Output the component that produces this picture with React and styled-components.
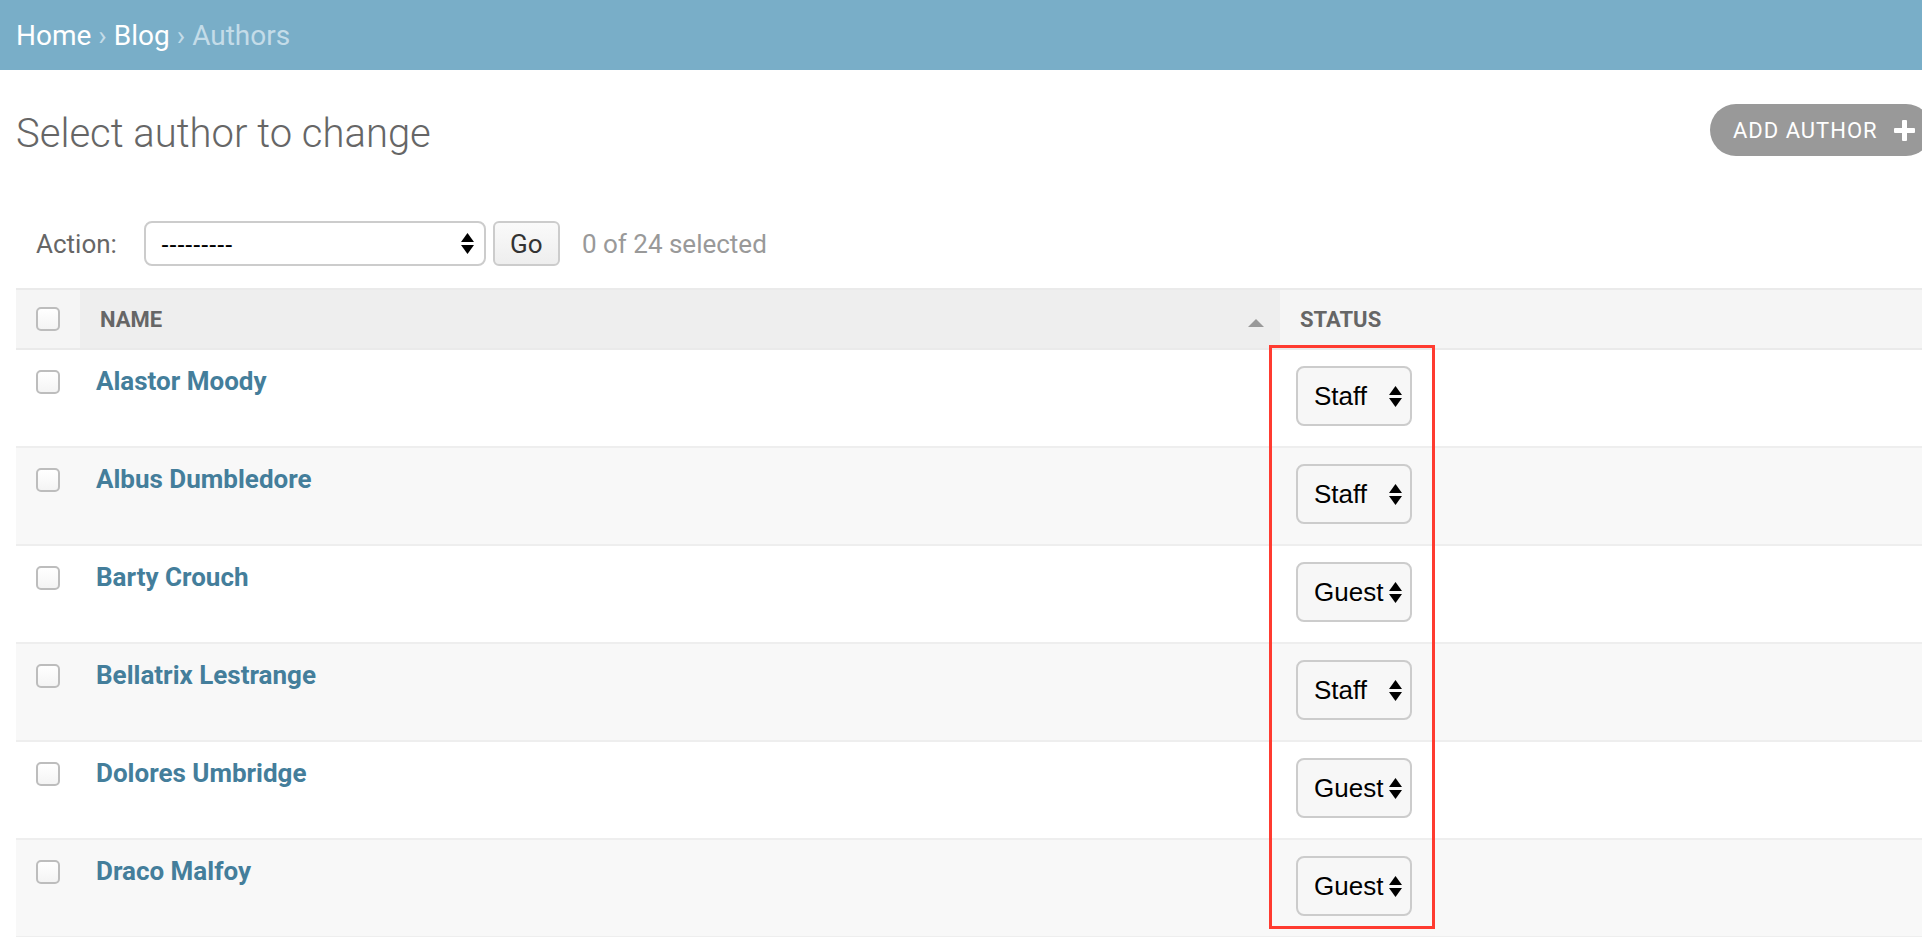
import React from "react";
import styled, { createGlobalStyle } from "styled-components";

const GlobalStyle = createGlobalStyle`
  html, body { margin: 0; padding: 0; overflow: hidden; background: #fff; }
  body { font-family: Roboto, "Liberation Sans", sans-serif; color: #333; }
  * { box-sizing: border-box; }
`;

const Breadcrumbs = styled.nav`
  height: 70px;
  background: #79aec8;
  display: flex;
  align-items: center;
  padding: 0 16px;
  font-size: 28px;
  color: #c4dce8;
`;

const Crumb = styled.a`
  color: #fff;
  text-decoration: none;
`;

const Sep = styled.span`
  margin: 0 7px;
`;

const Content = styled.main`
  padding: 34px 0 0 16px;
`;

const TitleRow = styled.div`
  display: flex;
  align-items: center;
  justify-content: space-between;
  height: 52px;
  margin-right: -10px;
`;

const Title = styled.h1`
  margin: 0;
  font-size: 40px;
  font-weight: 300;
  color: #666;
  line-height: 1;
  padding-top: 8px;
`;

const AddButton = styled.a`
  display: flex;
  align-items: center;
  gap: 16px;
  width: 222px;
  height: 52px;
  padding: 0 17px 0 23px;
  border-radius: 26px;
  background: #999;
  color: #fff;
  font-size: 22px;
  letter-spacing: 1px;
  text-transform: uppercase;
  text-decoration: none;
  white-space: nowrap;
`;

const ActionBar = styled.div`
  display: flex;
  align-items: center;
  height: 45px;
  margin-top: 65px;
  padding-left: 20px;
`;

const Label = styled.label`
  font-size: 26px;
  color: #666;
  margin-right: 27px;
`;

const ActionSelect = styled.div`
  display: flex;
  align-items: center;
  justify-content: space-between;
  width: 342px;
  height: 45px;
  border: 2px solid #ccc;
  border-radius: 8px;
  background: #fff;
  padding: 0 10px 0 15px;
  font-family: "Liberation Sans", Arial, sans-serif;
  font-size: 24px;
  color: #000;
`;

const GoButton = styled.button`
  margin-left: 7px;
  width: 67px;
  height: 45px;
  border: 2px solid #ccc;
  border-radius: 6px;
  background: linear-gradient(#fafafa, #eee);
  font-family: Roboto, sans-serif;
  font-size: 26px;
  color: #333;
  padding: 0;
`;

const Counter = styled.span`
  margin-left: 22px;
  font-size: 26px;
  color: #999;
`;

const TableWrap = styled.div`
  position: relative;
  margin-top: 22px;
`;

const Grid = styled.div`
  display: grid;
  grid-template-columns: 64px 1200px 1fr;
`;

const HeadRow = styled(Grid)`
  border-top: 2px solid #eaeaea;
  border-bottom: 2px solid #eaeaea;
  height: 62px;
`;

const HeadCell = styled.div`
  display: flex;
  align-items: center;
  padding: 0 ${(p) => (p.$check ? "0 0 20px" : "16px 0 20px")};
  background: ${(p) => (p.$sorted ? "#eee" : "#f5f5f5")};
  font-size: 22px;
  font-weight: 700;
  color: #666;
  text-transform: uppercase;
`;

const SortArrow = styled.span`
  margin-left: auto;
  margin-top: 8px;
  width: 0;
  height: 0;
  border-left: 8px solid transparent;
  border-right: 8px solid transparent;
  border-bottom: 8px solid #999;
`;

const Row = styled(Grid)`
  height: 98px;
  border-bottom: 2px solid #eee;
  background: ${(p) => (p.$odd ? "#f8f8f8" : "#fff")};
`;

const Cell = styled.div`
  padding: 16px 16px 0 ${(p) => (p.$check ? "20px" : "16px")};
`;

const Checkbox = styled.span`
  display: block;
  width: 24px;
  height: 24px;
  margin-top: ${(p) => (p.$head ? "0" : "4px")};
  border: 2px solid #bdbdbd;
  border-radius: 5px;
  background: linear-gradient(#fff, #f4f4f4);
`;

const NameLink = styled.a`
  display: inline-block;
  font-size: 26px;
  font-weight: 700;
  color: #447e9b;
  text-decoration: none;
`;

const StatusSelect = styled.div`
  display: flex;
  align-items: center;
  justify-content: space-between;
  width: 116px;
  height: 60px;
  border: 2px solid #ccc;
  border-radius: 8px;
  background: #f7f7f7;
  padding: 0 8px 0 16px;
  font-family: "Liberation Sans", Arial, sans-serif;
  font-size: 26px;
  color: #000;
`;

const Highlight = styled.div`
  position: absolute;
  left: 1253px;
  top: 57px;
  width: 166px;
  height: 584px;
  border: 3px solid #ff3b30;
  pointer-events: none;
`;

const Arrows = () => (
  <svg width="13" height="21" viewBox="0 0 13 21">
    <path d="M6.5 0 L13 9 L0 9 Z" fill="#000" />
    <path d="M0 12 L13 12 L6.5 21 Z" fill="#000" />
  </svg>
);

const Plus = () => (
  <svg width="21" height="21" viewBox="0 0 21 21">
    <rect x="8" y="0" width="5" height="21" rx="1" fill="#fff" />
    <rect x="0" y="8" width="21" height="5" rx="1" fill="#fff" />
  </svg>
);

const authors = [
  ["Alastor Moody", "Staff"],
  ["Albus Dumbledore", "Staff"],
  ["Barty Crouch", "Guest"],
  ["Bellatrix Lestrange", "Staff"],
  ["Dolores Umbridge", "Guest"],
  ["Draco Malfoy", "Guest"],
];

export default function App() {
  return (
    <>
      <GlobalStyle />
      <Breadcrumbs>
        <Crumb href="#">Home</Crumb>
        <Sep>›</Sep>
        <Crumb href="#">Blog</Crumb>
        <Sep>›</Sep>
        <span>Authors</span>
      </Breadcrumbs>
      <Content>
        <TitleRow>
          <Title>Select author to change</Title>
          <AddButton href="#">
            Add author
            <Plus />
          </AddButton>
        </TitleRow>
        <ActionBar>
          <Label>Action:</Label>
          <ActionSelect>
            <span>---------</span>
            <Arrows />
          </ActionSelect>
          <GoButton>Go</GoButton>
          <Counter>0 of 24 selected</Counter>
        </ActionBar>
        <TableWrap>
          <HeadRow>
            <HeadCell $check>
              <Checkbox $head />
            </HeadCell>
            <HeadCell $sorted>
              Name
              <SortArrow />
            </HeadCell>
            <HeadCell>Status</HeadCell>
          </HeadRow>
          {authors.map(([name, status], i) => (
            <Row key={name} $odd={i % 2 === 1}>
              <Cell $check>
                <Checkbox />
              </Cell>
              <Cell>
                <NameLink href="#">{name}</NameLink>
              </Cell>
              <Cell>
                <StatusSelect>
                  <span>{status}</span>
                  <Arrows />
                </StatusSelect>
              </Cell>
            </Row>
          ))}
          <Highlight />
        </TableWrap>
      </Content>
    </>
  );
}
